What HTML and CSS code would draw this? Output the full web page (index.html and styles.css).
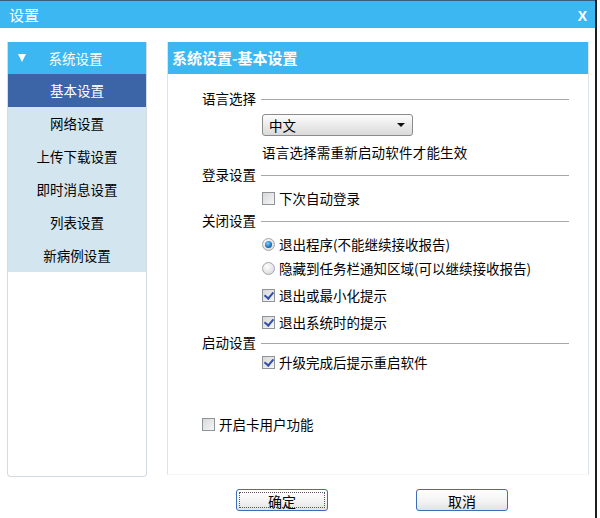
FILE: index.html
```html
<!DOCTYPE html>
<html lang="zh-CN">
<head>
  <meta charset="UTF-8">
  <title>设置</title>
  <link rel="stylesheet" href="styles.css">
</head>
<body>
  <div class="window">
    <div class="titlebar">
      <span class="title">设置</span>
      <span class="close">X</span>
    </div>

    <div class="content">
      <div class="nav">
        <div class="nav-head">
          <span class="nav-arrow"></span>
          <span class="nav-head-text">系统设置</span>
        </div>
        <ul class="nav-list">
          <li class="active">基本设置</li>
          <li>网络设置</li>
          <li>上传下载设置</li>
          <li>即时消息设置</li>
          <li>列表设置</li>
          <li>新病例设置</li>
        </ul>
      </div>

      <div class="panel">
        <div class="panel-head">系统设置-基本设置</div>
        <div class="panel-body">
          <div class="section first">
            <div class="section-title"><span>语言选择</span></div>
            <div class="section-body">
              <div class="select"><span>中文</span><i class="select-arrow"></i></div>
              <div class="note">语言选择需重新启动软件才能生效</div>
            </div>
          </div>

          <div class="section">
            <div class="section-title"><span>登录设置</span></div>
            <div class="section-body">
              <label class="option"><span class="check"></span>下次自动登录</label>
            </div>
          </div>

          <div class="section">
            <div class="section-title"><span>关闭设置</span></div>
            <div class="section-body">
              <label class="option"><span class="radio on"></span>退出程序(不能继续接收报告)</label>
              <label class="option"><span class="radio"></span>隐藏到任务栏通知区域(可以继续接收报告)</label>
              <label class="option loose"><span class="check on"></span>退出或最小化提示</label>
              <label class="option loose"><span class="check on"></span>退出系统时的提示</label>
            </div>
          </div>

          <div class="section compact">
            <div class="section-title"><span>启动设置</span></div>
            <div class="section-body">
              <label class="option"><span class="check on"></span>升级完成后提示重启软件</label>
            </div>
          </div>

          <label class="option card-user"><span class="check"></span>开启卡用户功能</label>
        </div>
      </div>
    </div>

    <div class="footer">
      <button class="btn btn-focus"><span>确定</span></button>
      <button class="btn"><span>取消</span></button>
    </div>
  </div>
</body>
</html>
```

FILE: styles.css
```css
* {
  margin: 0;
  padding: 0;
  box-sizing: border-box;
}
body {
  width: 600px;
  height: 518px;
  background: #ffffff;
  font-family: "Noto Sans CJK SC", "Noto Sans", sans-serif;
  font-size: 13.5px;
  color: #000;
  overflow: hidden;
}
.window {
  width: 597px;
  height: 518px;
  border-right: 2px solid #1e1e1e;
  display: flex;
  flex-direction: column;
}

/* title bar */
.titlebar {
  height: 28px;
  background: #3cb7f1;
  border-top: 1px solid #3a5f7a;
  display: flex;
  align-items: center;
  justify-content: space-between;
  padding: 0 8px 0 9px;
  color: #fff;
}
.title {
  font-size: 15px;
}
.close {
  font-family: "Liberation Sans", Arial, sans-serif;
  font-weight: bold;
  font-size: 14px;
  margin-top: 3px;
}

.content {
  display: flex;
  gap: 20px;
  padding: 14px 0 0 7px;
  height: 449px;
}

/* left navigation */
.nav {
  width: 140px;
  height: 435px;
  border: 1px solid #d3dbe1;
  border-top: none;
  border-radius: 0 0 4px 4px;
}
.nav-head {
  height: 32px;
  background: #3cb7f1;
  color: #fff;
  display: flex;
  align-items: center;
  padding-left: 10px;
}
.nav-arrow {
  width: 0;
  height: 0;
  border-left: 4.5px solid transparent;
  border-right: 4.5px solid transparent;
  border-top: 8px solid #fff;
}
.nav-head-text {
  flex: 1;
  text-align: center;
  padding-right: 21px;
}
.nav-list {
  list-style: none;
}
.nav-list li {
  height: 33px;
  line-height: 33px;
  text-align: center;
  background: #d3e6f0;
}
.nav-list li.active {
  background: #3c65a8;
  color: #fff;
}

/* right panel */
.panel {
  width: 422px;
  height: 433px;
  border: 1px solid #dde4e9;
  border-top: none;
  border-bottom-color: #f4f6f8;
}
.panel-head {
  height: 32px;
  line-height: 32px;
  background: #3cb7f1;
  color: #fff;
  font-size: 15px;
  font-weight: bold;
  padding-left: 4px;
}
.panel-body {
  padding: 0 19px 0 34px;
}

.section-title {
  display: flex;
  align-items: center;
  gap: 5px;
  height: 20px;
  margin-top: 2px;
}
.section-title::after {
  content: "";
  flex: 1;
  border-top: 1px solid #a8a8a8;
  margin-top: 2px;
}
.section.first .section-title {
  margin-top: 14px;
}
.section-body {
  padding-left: 60px;
}

.select {
  width: 151px;
  height: 22px;
  margin-top: 6px;
  border: 1px solid #8c8c8c;
  border-radius: 3px;
  background: linear-gradient(#fdfdfd, #e9e9e9 55%, #dadada);
  display: flex;
  align-items: center;
  justify-content: space-between;
  padding: 0 7px 0 6px;
}
.select-arrow {
  width: 0;
  height: 0;
  border-left: 4px solid transparent;
  border-right: 4px solid transparent;
  border-top: 4px solid #111;
}
.note {
  height: 20px;
  line-height: 20px;
  margin-top: 6px;
  letter-spacing: 0.2px;
}

.option {
  display: flex;
  align-items: center;
  gap: 4px;
  height: 20px;
  margin-top: 4px;
}
.option.loose {
  margin-top: 7px;
}
.section.compact .section-title,
.section.compact .option {
  margin-top: 0;
}
.option.card-user {
  margin-top: 42px;
}

.check {
  width: 13px;
  height: 13px;
  border: 1px solid #8f9499;
  background: linear-gradient(135deg, #d8d8d8, #f6f6f6);
  position: relative;
}
.check.on::after {
  content: "";
  position: absolute;
  left: 3px;
  top: 0px;
  width: 4px;
  height: 7px;
  border-right: 2px solid #3350a8;
  border-bottom: 2px solid #3350a8;
  transform: rotate(40deg);
}
.radio {
  width: 13px;
  height: 13px;
  border-radius: 50%;
  border: 1px solid #a3a8ad;
  background: radial-gradient(circle at 40% 35%, #ffffff, #d2d2d2);
  position: relative;
}
.radio.on::after {
  content: "";
  position: absolute;
  left: 2px;
  top: 2px;
  width: 7px;
  height: 7px;
  border-radius: 50%;
  background: radial-gradient(circle at 40% 35%, #7fd0ff, #1e6fb8 60%, #0b3f75);
}

/* footer buttons */
.footer {
  display: flex;
  gap: 88px;
  padding: 12px 0 0 236px;
}
.btn {
  width: 92px;
  height: 22px;
  border: 1px solid #3d6fb5;
  border-radius: 3px;
  background: linear-gradient(#ffffff, #f2f2f2 60%, #e2e2e2);
  font-family: inherit;
  font-size: 14px;
  color: #000;
  padding: 2px;
}
.btn span {
  display: block;
  height: 100%;
  line-height: 16px;
  border: 1px dotted transparent;
}
.btn-focus span {
  border-color: #555;
}
```
